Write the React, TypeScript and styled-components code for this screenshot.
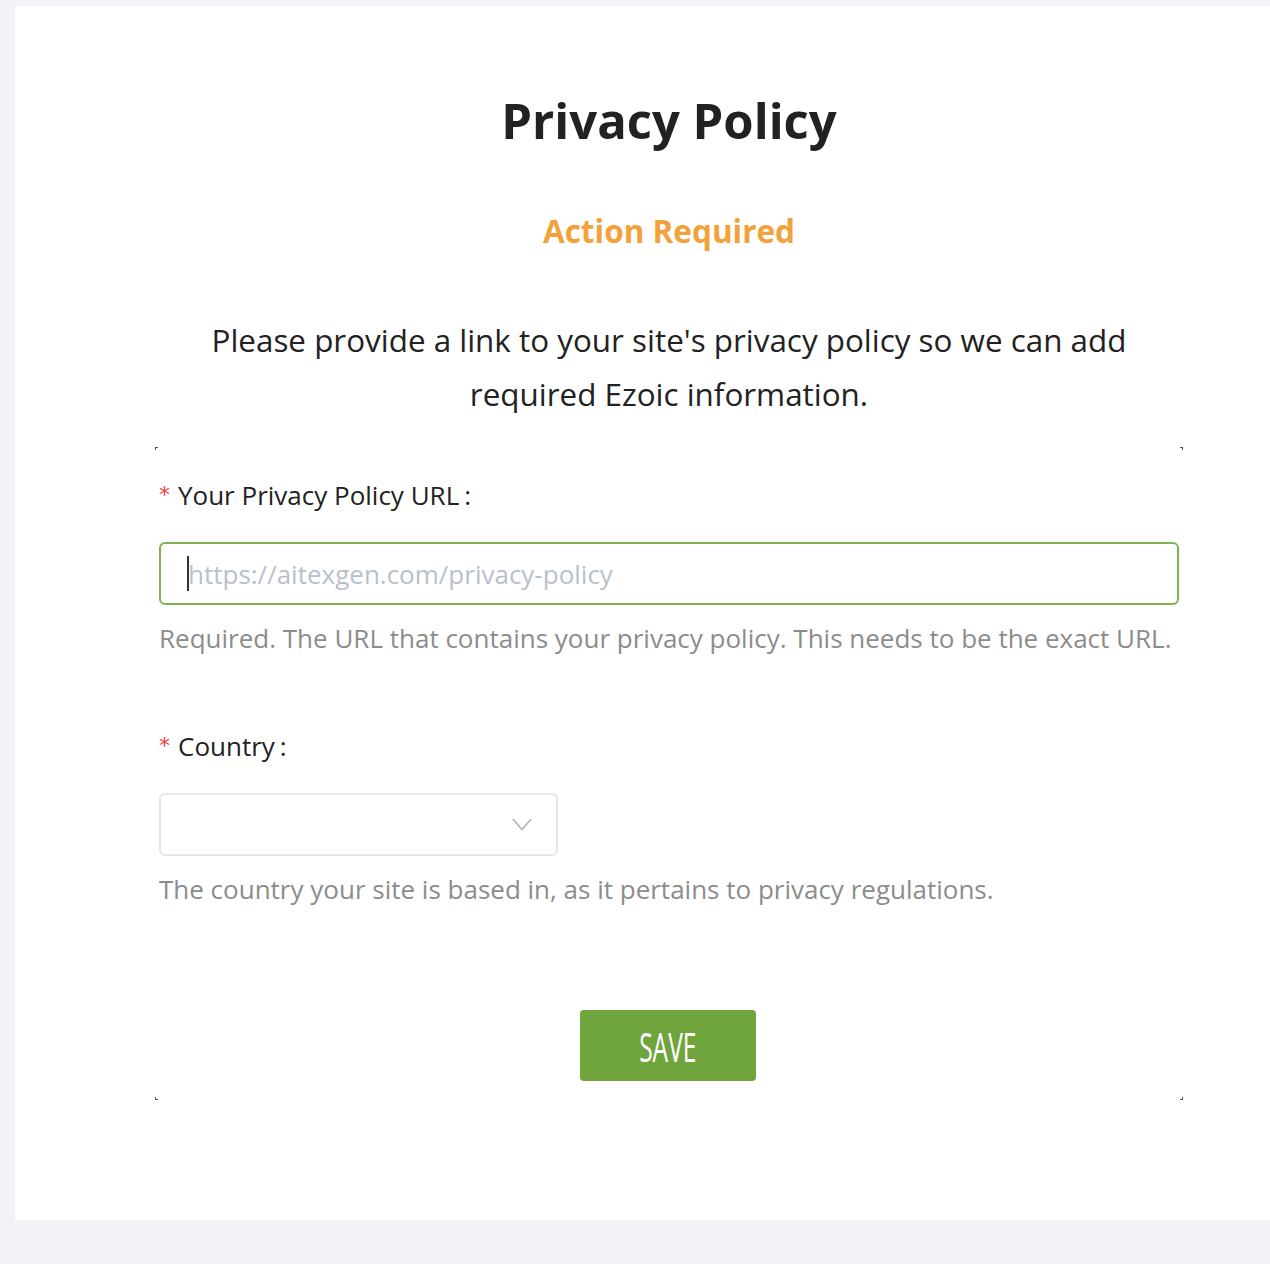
import React from "react";
import styled, { createGlobalStyle } from "styled-components";

const GlobalStyle = createGlobalStyle`
  html, body {
    margin: 0;
    padding: 0;
    background: #f2f3f7;
    overflow-x: hidden;
  }
  body {
    font-family: "Open Sans", "Noto Sans", sans-serif;
    color: #222222;
  }
  * {
    box-sizing: border-box;
  }
`;

const Page = styled.div`
  width: 1270px;
  min-height: 1264px;
  padding: 6px 0 44px 15px;
  overflow: hidden;
`;

const Card = styled.div`
  width: 1308px;
  height: 1214px;
  background: #ffffff;
  padding-top: 82px;
  display: flex;
  flex-direction: column;
  align-items: center;
`;

const Title = styled.h1`
  margin: 0;
  font-size: 49px;
  line-height: 64px;
  font-weight: 700;
  color: #222222;
`;

const Status = styled.h2`
  margin: 59px 0 0;
  font-size: 31.5px;
  line-height: 40px;
  font-weight: 700;
  color: #f3a23b;
`;

const Intro = styled.p`
  margin: 62px 0 0;
  width: 960px;
  text-align: center;
  font-size: 31.4px;
  line-height: 54px;
  color: #222222;
`;

const FormBox = styled.form`
  position: relative;
  margin-top: 26px;
  width: 1028px;
  padding: 32px 4px 19px;
  display: flex;
  flex-direction: column;
`;

const Corner = styled.span<{ $v: "top" | "bottom"; $h: "left" | "right" }>`
  position: absolute;
  ${(p) => p.$v}: 0;
  ${(p) => p.$h}: 0;
  width: 3px;
  height: 3px;
  border-${(p) => p.$v}: 1px solid #555;
  border-${(p) => p.$h}: 1px solid #555;
`;

const Field = styled.div<{ $gap?: number }>`
  display: flex;
  flex-direction: column;
  margin-bottom: ${(p) => p.$gap ?? 0}px;
`;

const Label = styled.label`
  display: flex;
  align-items: center;
  font-size: 26px;
  line-height: 32px;
  color: #222222;
  margin-bottom: 31px;
`;

const Star = styled.span`
  color: #f04134;
  font-size: 22px;
  margin-right: 8px;
  font-family: "DejaVu Sans", sans-serif;
`;

const Colon = styled.span`
  margin-left: 5px;
`;

const InputWrap = styled.div`
  position: relative;
  width: 100%;
`;

const TextInput = styled.input`
  width: 100%;
  height: 63px;
  border: 2px solid #7db353;
  border-radius: 6px;
  padding: 0 27px;
  font-family: "Open Sans", "Noto Sans", sans-serif;
  font-size: 26px;
  color: #222;
  outline: none;

  &::placeholder {
    color: #b9c0cc;
  }
`;

const Caret = styled.span`
  position: absolute;
  left: 28px;
  top: 14px;
  width: 2px;
  height: 35px;
  background: #333;
`;

const Select = styled.div`
  width: 399px;
  height: 63px;
  border: 2px solid #e3e6ec;
  border-radius: 6px;
  display: flex;
  align-items: center;
  justify-content: flex-end;
  padding-right: 24px;
`;

const Help = styled.div`
  margin-top: 17px;
  font-size: 26px;
  line-height: 32px;
  color: #8c8c8c;
`;

const SaveButton = styled.button`
  align-self: center;
  margin-top: 105px;
  margin-left: -2px;
  width: 176px;
  height: 71px;
  border: none;
  border-radius: 4px;
  background: #70a43c;
  color: #ffffff;
  cursor: pointer;
  display: flex;
  align-items: center;
  justify-content: center;
  padding: 0;
`;

const SaveText = styled.span`
  display: inline-block;
  font-family: "Open Sans", "Noto Sans", sans-serif;
  font-weight: 500;
  font-size: 41px;
  line-height: 1;
  transform: scaleX(0.6);
  margin-top: 2px;
`;

const Chevron = () => (
  <svg width="20" height="13" viewBox="0 0 20 13" fill="none">
    <path d="M0.8 1 L10 11.5 L19.2 1" stroke="#b3b3b3" strokeWidth="1.6" />
  </svg>
);

export default function App() {
  return (
    <>
      <GlobalStyle />
      <Page>
        <Card>
          <Title>Privacy Policy</Title>
          <Status>Action Required</Status>
          <Intro>
            Please provide a link to your site's privacy policy so we can add
            required Ezoic information.
          </Intro>
          <FormBox onSubmit={(e) => e.preventDefault()}>
            <Corner $v="top" $h="left" />
            <Corner $v="top" $h="right" />
            <Corner $v="bottom" $h="left" />
            <Corner $v="bottom" $h="right" />
            <Field $gap={76}>
              <Label>
                <Star>*</Star>
                Your Privacy Policy URL<Colon>:</Colon>
              </Label>
              <InputWrap>
                <TextInput placeholder="https://aitexgen.com/privacy-policy" />
                <Caret />
              </InputWrap>
              <Help>
                Required. The URL that contains your privacy policy. This needs
                to be the exact URL.
              </Help>
            </Field>
            <Field>
              <Label>
                <Star>*</Star>
                Country<Colon>:</Colon>
              </Label>
              <Select>
                <Chevron />
              </Select>
              <Help>
                The country your site is based in, as it pertains to privacy
                regulations.
              </Help>
            </Field>
            <SaveButton type="submit">
              <SaveText>SAVE</SaveText>
            </SaveButton>
          </FormBox>
        </Card>
      </Page>
    </>
  );
}
